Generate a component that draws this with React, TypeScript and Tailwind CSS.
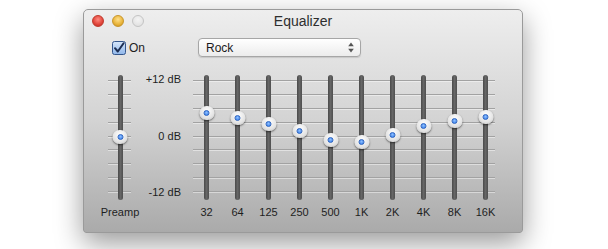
import React from "react"

type Band = { label: string; pos: number }

// knob centre, in px from the top of the track
const bands: Band[] = [
  { label: "32", pos: 38 },
  { label: "64", pos: 43 },
  { label: "125", pos: 48.5 },
  { label: "250", pos: 55.5 },
  { label: "500", pos: 64.5 },
  { label: "1K", pos: 66.5 },
  { label: "2K", pos: 59.5 },
  { label: "4K", pos: 50.5 },
  { label: "8K", pos: 45.5 },
  { label: "16K", pos: 41.5 },
]

const font = { fontFamily: '"Liberation Sans", Arial, sans-serif' }

function GridLines({ className }: { className: string }) {
  return (
    <div className={`absolute top-[5px] h-[112px] flex flex-col justify-between ${className}`}>
      {Array.from({ length: 9 }).map((_, i) => (
        <div key={i} className="h-px bg-[#a2a2a2] shadow-[0_1px_0_rgba(255,255,255,0.45)]" />
      ))}
    </div>
  )
}

function Knob({ pos }: { pos: number }) {
  return (
    <div
      className="absolute left-1/2 -translate-x-1/2 w-[15px] h-[14px] rounded-full bg-[radial-gradient(circle_at_50%_35%,#ffffff,#e4e4e4_60%,#bdbdbd)] shadow-[0_1px_2px_rgba(0,0,0,0.55)] flex items-center justify-center"
      style={{ top: pos - 7 }}
    >
      <div className="w-[6px] h-[6px] rounded-full bg-[radial-gradient(circle_at_50%_40%,#8ec0ff,#2d77ea)] border border-[#2a62c0]" />
    </div>
  )
}

function Slider({ pos, label, width }: { pos: number; label: string; width: string }) {
  return (
    <div className={`flex flex-col items-center ${width}`}>
      <div className="relative h-[125px] w-full flex justify-center">
        <div className="w-[5px] h-full rounded-full bg-linear-to-r from-[#4a4a4a] via-[#666666] to-[#4f4f4f]" />
        <Knob pos={pos} />
      </div>
      <div className="mt-[6px] text-[11px] leading-[13px] text-[#1e1e1e] whitespace-nowrap">{label}</div>
    </div>
  )
}

export default function App() {
  return (
    <div className="w-[608px] h-[249px] bg-white overflow-hidden pt-[9px] pl-[83px]" style={font}>
      <div className="w-[440px] h-[224px] rounded-t-[5px] rounded-b-[3px] border border-[#9a9a9a] bg-linear-to-b from-[#eeeeee] via-[#d3d3d3] to-[#aaaaaa] shadow-[0_10px_28px_rgba(0,0,0,0.4)] flex flex-col">
        {/* title bar */}
        <div className="h-[22px] grid grid-cols-[1fr_auto_1fr] items-center px-[8px]">
          <div className="flex gap-[8px]">
            <div className="w-[12px] h-[12px] rounded-full bg-[radial-gradient(circle_at_50%_35%,#ff8a80,#e0443a_60%,#b02a22)] border border-[#c0392b]" />
            <div className="w-[12px] h-[12px] rounded-full bg-[radial-gradient(circle_at_50%_35%,#ffe08a,#e8b33a_60%,#c08a18)] border border-[#c9962a]" />
            <div className="w-[12px] h-[12px] rounded-full bg-[radial-gradient(circle_at_50%_35%,#f4f4f4,#dcdcdc)] border border-[#c4c4c4]" />
          </div>
          <div className="text-[14px] text-[#2e2e2e] leading-none">Equalizer</div>
          <div />
        </div>

        {/* controls */}
        <div className="mt-[6px] h-[19px] flex items-center pl-[28px]">
          <div className="w-[86px] flex items-center gap-[3px]">
            <svg width="14" height="14" viewBox="0 0 14 14">
              <defs>
                <linearGradient id="cb" x1="0" y1="0" x2="0" y2="1">
                  <stop offset="0" stopColor="#d6e6fa" />
                  <stop offset="1" stopColor="#8fb6ea" />
                </linearGradient>
              </defs>
              <rect x="0.5" y="0.5" width="13" height="13" rx="2" fill="url(#cb)" stroke="#34568c" />
              <path d="M3 7.2 L5.8 10.5 L11.6 2.2" fill="none" stroke="#1b2d52" strokeWidth="2" strokeLinecap="round" strokeLinejoin="round" />
            </svg>
            <span className="text-[12px] text-[#1e1e1e]">On</span>
          </div>
          <div className="w-[163px] h-[19px] rounded-[4px] border border-[#a6a6a6] bg-linear-to-b from-[#ffffff] to-[#ececec] shadow-[0_1px_1px_rgba(0,0,0,0.12)] flex items-center justify-between pl-[7px] pr-[6px]">
            <span className="text-[12px] text-[#1a1a1a]">Rock</span>
            <svg width="6" height="11" viewBox="0 0 6 11">
              <path d="M3 0.5 L5.8 4.2 L0.2 4.2 Z" fill="#555555" />
              <path d="M3 10.5 L5.8 6.8 L0.2 6.8 Z" fill="#555555" />
            </svg>
          </div>
        </div>

        {/* sliders */}
        <div className="mt-[18px] flex pl-[21px]">
          <div className="relative">
            <GridLines className="left-[3px] right-[4px]" />
            <Slider pos={62} label="Preamp" width="w-[30px]" />
          </div>
          <div className="w-[46px] h-[126px] -mt-[2px] flex flex-col justify-between items-end text-[11px] leading-[13px] text-[#1e1e1e]">
            <span>+12 dB</span>
            <span>0 dB</span>
            <span>-12 dB</span>
          </div>
          <div className="relative ml-[10px] flex">
            <GridLines className="left-[2px] right-[6px]" />
            {bands.map((b) => (
              <Slider key={b.label} pos={b.pos} label={b.label} width="w-[31px]" />
            ))}
          </div>
        </div>
      </div>
    </div>
  )
}
